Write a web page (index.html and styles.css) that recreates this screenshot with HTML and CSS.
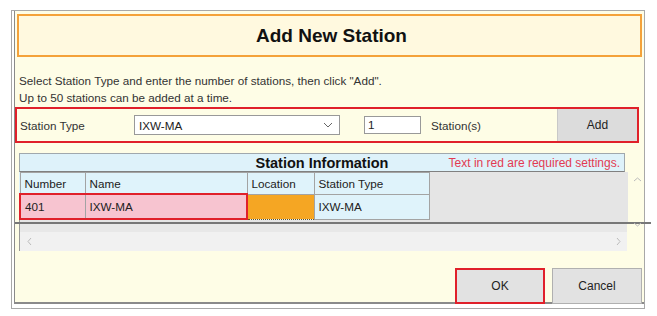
FILE: index.html
```html
<!DOCTYPE html>
<html lang="en">
<head>
  <meta charset="UTF-8" />
  <title>Add New Station</title>
  <link rel="stylesheet" href="styles.css">
</head>
<body>
  <div class="frame">
    <div class="dialog">
      <div class="title-box">
        <h2>Add New Station</h2>
      </div>

      <p class="note">Select Station Type and enter the number of stations, then click "Add".<br>Up to 50 stations can be added at a time.</p>

      <div class="add-row">
        <span class="add-label">Station Type</span>
        <div class="select">
          <span>IXW-MA</span>
          <svg class="chevron" width="10" height="6" viewBox="0 0 10 6"><path d="M1 1 L5 5 L9 1" fill="none" stroke="#666" stroke-width="1"/></svg>
        </div>
        <div class="count">1</div>
        <span class="unit">Station(s)</span>
        <button class="add-btn">Add</button>
      </div>

      <div class="grid">
        <div class="grid-head">
          <span class="grid-title">Station Information</span>
          <span class="required">Text in red are required settings.</span>
        </div>
        <div class="grid-body">
          <div class="grid-view">
            <table class="stations">
              <tr>
                <th class="c-num">Number</th>
                <th class="c-name">Name</th>
                <th class="c-loc">Location</th>
                <th class="c-type">Station Type</th>
              </tr>
              <tr class="row-new">
                <td class="req req-left">401</td>
                <td class="req req-right">IXW-MA</td>
                <td class="loc"></td>
                <td>IXW-MA</td>
              </tr>
            </table>
          </div>
          <div class="vscroll">
            <svg width="9" height="5" viewBox="0 0 9 5"><path d="M1 4 L4.5 1 L8 4" fill="none" stroke="#bbb" stroke-width="1"/></svg>
            <svg class="down" width="9" height="5" viewBox="0 0 9 5"><path d="M1 1 L4.5 4 L8 1" fill="none" stroke="#bbb" stroke-width="1"/></svg>
          </div>
        </div>
        <div class="hscroll">
          <svg width="5" height="9" viewBox="0 0 5 9"><path d="M4 1 L1 4.5 L4 8" fill="none" stroke="#bbb" stroke-width="1"/></svg>
          <svg width="5" height="9" viewBox="0 0 5 9"><path d="M1 1 L4 4.5 L1 8" fill="none" stroke="#bbb" stroke-width="1"/></svg>
        </div>
      </div>

      <div class="actions">
        <button class="btn btn-ok">OK</button>
        <button class="btn">Cancel</button>
      </div>
    </div>
  </div>
</body>
</html>
```

FILE: styles.css
```css
body {
  margin: 0;
  background-color: #fff;
  font-family: "Liberation Sans", Arial, sans-serif;
  font-size: 11.7px;
  color: #222;
}

.frame {
  margin: 10px 0 0 11px;
  width: 630px;
  height: 295px;
  border: 1px solid #a8a8a8;
  padding: 0 0 2px 2px;
  background-color: #fff;
}

.dialog {
  height: 293px;
  border-left: 1px solid #8a8a8a;
  border-bottom: 2px solid #8a8a8a;
  background-color: #fefde6;
  padding-top: 3px;
  box-sizing: border-box;
}

.title-box {
  margin: 0 2px 0 2px;
  height: 43px;
  border: 2px solid #f4a23a;
  background-color: #fff9df;
  box-sizing: border-box;
  display: flex;
  align-items: center;
  justify-content: center;
}

.title-box h2 {
  margin: 0 0 0 4px;
  font-size: 19px;
  color: #111;
}

.note {
  margin: 15px 0 0 4px;
  line-height: 17px;
  color: #333;
}

.add-row {
  margin-top: 1px;
  width: 624px;
  height: 36px;
  border: 2px solid #e0202a;
  box-sizing: border-box;
  display: flex;
  align-items: center;
}

.add-label {
  width: 114px;
  padding-left: 3px;
  color: #333;
}

.select {
  width: 206px;
  height: 20px;
  border: 1px solid #999;
  background-color: #fff;
  box-sizing: border-box;
  display: flex;
  align-items: center;
  justify-content: space-between;
  padding: 0 6px 0 4px;
}

.count {
  margin-left: 24px;
  width: 57px;
  height: 18px;
  border: 1px solid #999;
  background-color: #fff;
  box-sizing: border-box;
  padding-left: 3px;
  line-height: 16px;
}

.unit {
  margin-left: 10px;
  color: #333;
}

.add-btn {
  margin-left: auto;
  width: 80px;
  height: 32px;
  border: none;
  border-left: 1px solid #c8c8c8;
  background-color: #dcdcdc;
  font-family: inherit;
  font-size: 12px;
  color: #222;
}

.grid {
  margin: 10px 0 0 4px;
}

.grid-head {
  width: 606px;
  height: 19px;
  border: 1px solid #a0a8ad;
  border-bottom-color: #808080;
  background-color: #def2fa;
  box-sizing: border-box;
  position: relative;
  text-align: center;
}

.grid-title {
  font-size: 14.5px;
  font-weight: bold;
  line-height: 18px;
  color: #111;
}

.required {
  position: absolute;
  right: 4px;
  top: 2px;
  font-size: 12px;
  color: #e23a52;
}

.grid-body {
  display: flex;
  height: 50px;
  border-bottom: 2px solid #777;
  margin-left: -4px;
  width: 632px;
  padding-left: 4px;
}

.grid-view {
  width: 608px;
  background-color: #e5e5e5;
  border-left: 1px solid #999;
}

.stations {
  border-collapse: collapse;
  background-color: #dff3fb;
  margin-left: -1px;
}

.stations th,
.stations td {
  border: 1px solid #a3a3a3;
  text-align: left;
  font-weight: normal;
  padding: 0 4px;
  color: #222;
}

.stations th {
  height: 20px;
}

.stations td {
  height: 23px;
}

.c-num { width: 56px; }
.c-name { width: 153px; }
.c-loc { width: 58px; }
.c-type { width: 106px; }

.row-new .req {
  background-color: #f7c4d0;
  border-top: 2px solid #e0202a;
  border-bottom: 2px solid #e0202a;
}

.row-new .req-left {
  border-left: 2px solid #e0202a;
}

.row-new .req-right {
  border-right: 2px solid #e0202a;
}

.row-new .loc {
  background-color: #f5a623;
  border: 1px dotted #6a5020;
}

.vscroll {
  width: 18px;
  display: flex;
  flex-direction: column;
  align-items: center;
  justify-content: space-between;
  padding: 5px 0 0;
  box-sizing: border-box;
}

.vscroll .down {
  margin-bottom: -5px;
}

.hscroll {
  width: 608px;
  height: 27px;
  border-left: 1px solid #999;
  background: linear-gradient(#e8e8e8 0 8px, #f1f1f1 8px);
  display: flex;
  justify-content: space-between;
  align-items: center;
  padding: 8px 6px 0 7px;
  box-sizing: border-box;
}

.actions {
  display: flex;
  justify-content: flex-end;
  gap: 7px;
  margin: 17px 2px 0 0;
}

.btn {
  width: 90px;
  height: 36px;
  border: 1px solid #b0b0b0;
  background-color: #e2e2e2;
  font-family: inherit;
  font-size: 12px;
  color: #222;
}

.btn-ok {
  border: 2px solid #e0202a;
}
```
